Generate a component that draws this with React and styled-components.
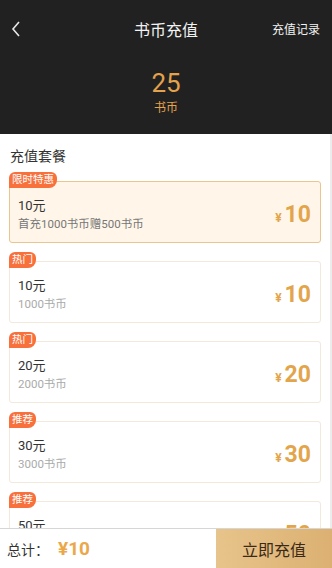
import React from "react";
import styled, { createGlobalStyle } from "styled-components";

const Global = createGlobalStyle`
  html, body { margin: 0; padding: 0; }
  body { font-family: Roboto, "Noto Sans CJK SC", sans-serif; background: #fff; }
  * { box-sizing: border-box; }
`;

const Page = styled.div`
  height: 100vh;
  display: flex;
  flex-direction: column;
  overflow: hidden;
`;

const Header = styled.header`
  background: #212121;
  padding-bottom: 18px;
`;

const NavBar = styled.div`
  height: 57px;
  display: flex;
  align-items: center;
  justify-content: space-between;
  padding: 0 12px 0 11px;
  position: relative;
`;

const BackButton = styled.button`
  background: none;
  border: 0;
  padding: 0;
  width: 20px;
  height: 20px;
  display: flex;
  align-items: center;
`;

const Title = styled.h1`
  position: absolute;
  left: 0;
  right: 0;
  text-align: center;
  margin: 0;
  font-size: 16px;
  font-weight: 400;
  color: #f2f2f2;
  pointer-events: none;
`;

const NavLink = styled.span`
  font-size: 12px;
  color: #f2f2f2;
`;

const Balance = styled.div`
  display: flex;
  flex-direction: column;
  align-items: center;
  color: #e3a24c;
`;

const BalanceValue = styled.div`
  font-size: 26px;
  line-height: 30px;
  margin-top: 11px;
`;

const BalanceUnit = styled.div`
  font-size: 12px;
  line-height: 16px;
  margin-top: 2px;
`;

const Body = styled.main`
  flex: 1;
  overflow: hidden;
  padding: 12px 9px 0 9px;
  border-right: 2px solid #ececec;
`;

const SectionTitle = styled.h2`
  margin: 0 0 6px 1px;
  font-size: 14px;
  line-height: 20px;
  font-weight: 400;
  color: #333;
`;

const Item = styled.div`
  position: relative;
  padding-top: 9px;
  margin-bottom: 9px;
`;

const Badge = styled.span`
  position: absolute;
  top: 0;
  left: 0;
  height: 16px;
  line-height: 16px;
  padding: 0 3px 0 3px;
  font-size: 10.5px;
  color: #fff;
  background: #f8703c;
  border-radius: 6px 6px 8px 0;
`;

const Card = styled.div`
  height: 62px;
  display: flex;
  align-items: center;
  justify-content: space-between;
  padding: 5px 9px 0 8px;
  border: 1px solid ${(p) => (p.$active ? "#e9c591" : "#f3e8dc")};
  background: ${(p) => (p.$active ? "#fff6e9" : "#fff")};
  border-radius: 3px;
`;

const Info = styled.div`
  display: flex;
  flex-direction: column;
`;

const Amount = styled.div`
  font-size: 13px;
  line-height: 18px;
  color: #333;
`;

const Coins = styled.div`
  font-size: 11.5px;
  line-height: 18px;
  margin-top: 0;
  color: ${(p) => (p.$active ? "#777" : "#aaa")};
`;

const Price = styled.div`
  color: #e2a54c;
  font-weight: 700;
  display: flex;
  align-items: baseline;
`;

const Yen = styled.span`
  font-size: 12px;
  margin-right: 3px;
`;

const PriceNum = styled.span`
  font-size: 23px;
`;

const Footer = styled.footer`
  height: 40px;
  flex-shrink: 0;
  display: flex;
  border-top: 1px solid #d6d6d6;
  background: #fff;
`;

const Total = styled.div`
  flex: 1;
  display: flex;
  align-items: center;
  padding-left: 7px;
`;

const TotalLabel = styled.span`
  font-size: 14px;
  color: #333;
`;

const TotalValue = styled.span`
  font-size: 19px;
  font-weight: 700;
  color: #eba84a;
  margin-left: 9px;
`;

const PayButton = styled.button`
  width: 116px;
  border: 0;
  margin: 0;
  background: linear-gradient(90deg, #e7c48b, #dcb072);
  color: #3b2a16;
  font-size: 16px;
  font-family: inherit;
`;

const packages = [
  { tag: "限时特惠", amount: "10元", coins: "首充1000书币赠500书币", price: "10", active: true },
  { tag: "热门", amount: "10元", coins: "1000书币", price: "10" },
  { tag: "热门", amount: "20元", coins: "2000书币", price: "20" },
  { tag: "推荐", amount: "30元", coins: "3000书币", price: "30" },
  { tag: "推荐", amount: "50元", coins: "5000书币", price: "50" },
];

export default function App() {
  return (
    <Page>
      <Global />
      <Header>
        <NavBar>
          <BackButton aria-label="back">
            <svg width="10" height="16" viewBox="0 0 10 16">
              <polyline points="8,1 2,8 8,15" fill="none" stroke="#e8e8e8" strokeWidth="1.6" />
            </svg>
          </BackButton>
          <Title>书币充值</Title>
          <NavLink>充值记录</NavLink>
        </NavBar>
        <Balance>
          <BalanceValue>25</BalanceValue>
          <BalanceUnit>书币</BalanceUnit>
        </Balance>
      </Header>
      <Body>
        <SectionTitle>充值套餐</SectionTitle>
        {packages.map((p, i) => (
          <Item key={i}>
            <Card $active={p.active}>
              <Info>
                <Amount>{p.amount}</Amount>
                <Coins $active={p.active}>{p.coins}</Coins>
              </Info>
              <Price>
                <Yen>¥</Yen>
                <PriceNum>{p.price}</PriceNum>
              </Price>
            </Card>
            <Badge>{p.tag}</Badge>
          </Item>
        ))}
      </Body>
      <Footer>
        <Total>
          <TotalLabel>总计：</TotalLabel>
          <TotalValue>¥10</TotalValue>
        </Total>
        <PayButton>立即充值</PayButton>
      </Footer>
    </Page>
  );
}
